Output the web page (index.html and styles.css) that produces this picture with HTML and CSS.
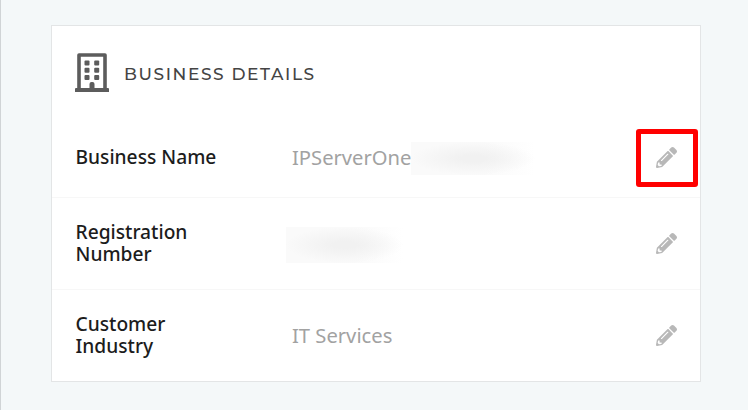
FILE: index.html
```html
<!DOCTYPE html>
<html lang="en">
  <head>
    <meta charset="UTF-8" />
    <meta name="viewport" content="width=device-width, initial-scale=1.0" />
    <title>Business Details</title>
    <link rel="stylesheet" href="styles.css">
  </head>
  <body>
    <svg class="sprite" aria-hidden="true">
      <symbol id="pencil" viewBox="0 0 512 512">
        <path d="M497.9 142.1l-46.1 46.1c-4.7 4.7-12.3 4.7-17 0l-111-111c-4.7-4.7-4.7-12.3 0-17l46.1-46.1c18.7-18.7 49.1-18.7 67.9 0l60.1 60.1c18.8 18.7 18.8 49.1 0 67.9zM284.2 99.8L21.6 362.4.4 483.9c-2.9 16.4 11.4 30.6 27.8 27.8l121.5-21.3 262.6-262.6c4.7-4.7 4.7-12.3 0-17l-111-111c-4.8-4.7-12.4-4.7-17.1 0zM124.1 339.9c-5.5-5.5-5.5-14.3 0-19.8l154-154c5.5-5.5 14.3-5.5 19.8 0s5.5 14.3 0 19.8l-154 154c-5.5 5.5-14.3 5.5-19.8 0zM88 424h48v36.3l-64.5 11.3-31.1-31.1L51.7 376H88v48z" />
      </symbol>
    </svg>

    <main class="card">
      <header class="card-header">
        <svg class="building" viewBox="0 0 34 39">
          <path d="M4 36V2h26v34" fill="none" stroke="currentColor" stroke-width="3.6" stroke-linejoin="round" />
          <path d="M1 35h32q1 0 1 1v3H0v-3q0-1 1-1zM14.5 36v-5q0-2 2-2h1q2 0 2 2v5z" />
          <g>
            <rect x="9.5" y="7.5" width="5" height="5" rx="1" />
            <rect x="19.2" y="7.5" width="5" height="5" rx="1" />
            <rect x="9.5" y="14.7" width="5" height="5" rx="1" />
            <rect x="19.2" y="14.7" width="5" height="5" rx="1" />
            <rect x="9.5" y="22" width="5" height="5" rx="1" />
            <rect x="19.2" y="22" width="5" height="5" rx="1" />
          </g>
        </svg>
        <h1>BUSINESS DETAILS</h1>
      </header>

      <div class="row row-first">
        <div class="label">Business Name</div>
        <div class="value"><span class="text">IPServerOne</span><span class="redacted redacted-name"></span></div>
        <button class="edit edit-active" aria-label="Edit business name">
          <svg><use href="#pencil" /></svg>
        </button>
      </div>

      <div class="row">
        <div class="label">Registration Number</div>
        <div class="value"><span class="redacted redacted-number"></span></div>
        <button class="edit" aria-label="Edit registration number">
          <svg><use href="#pencil" /></svg>
        </button>
      </div>

      <div class="row">
        <div class="label">Customer Industry</div>
        <div class="value"><span class="text">IT Services</span></div>
        <button class="edit" aria-label="Edit customer industry">
          <svg><use href="#pencil" /></svg>
        </button>
      </div>
    </main>
  </body>
</html>
```

FILE: styles.css
```css
:root {
  --bg-color: #f4f8f9;
  --card-border: #e3e5e6;
  --row-border: #f7f7f7;
  --text-color: #1c1c1c;
  --muted-color: #a2a2a2;
  --icon-color: #b8b8b8;
  --highlight: #ff0000;
}

* {
  margin: 0;
  padding: 0;
  box-sizing: border-box;
}

body {
  min-height: 100vh;
  padding: 25px 47px 28px 50px;
  border-left: 1px solid #d0d4d6;
  background-color: var(--bg-color);
  font-family: "Noto Sans", sans-serif;
}

.sprite {
  display: none;
}

.card {
  width: 650px;
  height: 357px;
  background: #ffffff;
  border: 1px solid var(--card-border);
}

.card-header {
  display: flex;
  align-items: center;
  gap: 15px;
  height: 92px;
  padding: 1px 23px 0;
}

.building {
  width: 34px;
  height: 39px;
  color: #5c5c5c;
  fill: currentColor;
}

h1 {
  padding-top: 3px;
  font-family: "Montserrat", "Inter", sans-serif;
  font-size: 17px;
  font-weight: 500;
  letter-spacing: 1.6px;
  color: #444444;
  white-space: nowrap;
}

.row {
  display: grid;
  grid-template-columns: 217px 1fr 62px;
  align-items: center;
  height: 92px;
  padding: 0 2px 0 23px;
  border-top: 1px solid var(--row-border);
}

.row-first {
  height: 79px;
  border-top: none;
}

.label {
  width: 150px;
  padding: 0 0 2px 0.5px;
  font-size: 19.2px;
  font-weight: 500;
  line-height: 22px;
  color: var(--text-color);
}

.value {
  display: flex;
  align-items: center;
  font-size: 20.2px;
  line-height: 26px;
  color: var(--muted-color);
}

.text {
  padding-bottom: 2px;
}

.redacted {
  margin-top: 2px;
  background:
    radial-gradient(closest-side, #f1f1f1 20%, rgba(241, 241, 241, 0)),
    linear-gradient(to right, #fafafa 60%, #ffffff);
}

.redacted-name {
  width: 124px;
  height: 33px;
}

.redacted-number {
  width: 117px;
  height: 36px;
  margin-left: -6px;
}

.edit {
  display: flex;
  align-items: center;
  justify-content: center;
  height: 58px;
  padding-right: 2px;
  border: 5px solid transparent;
  background: none;
  cursor: pointer;
}

.edit svg {
  width: 21px;
  height: 21px;
  fill: var(--icon-color);
}

.edit-active {
  border-color: var(--highlight);
  border-radius: 3px;
}
```
